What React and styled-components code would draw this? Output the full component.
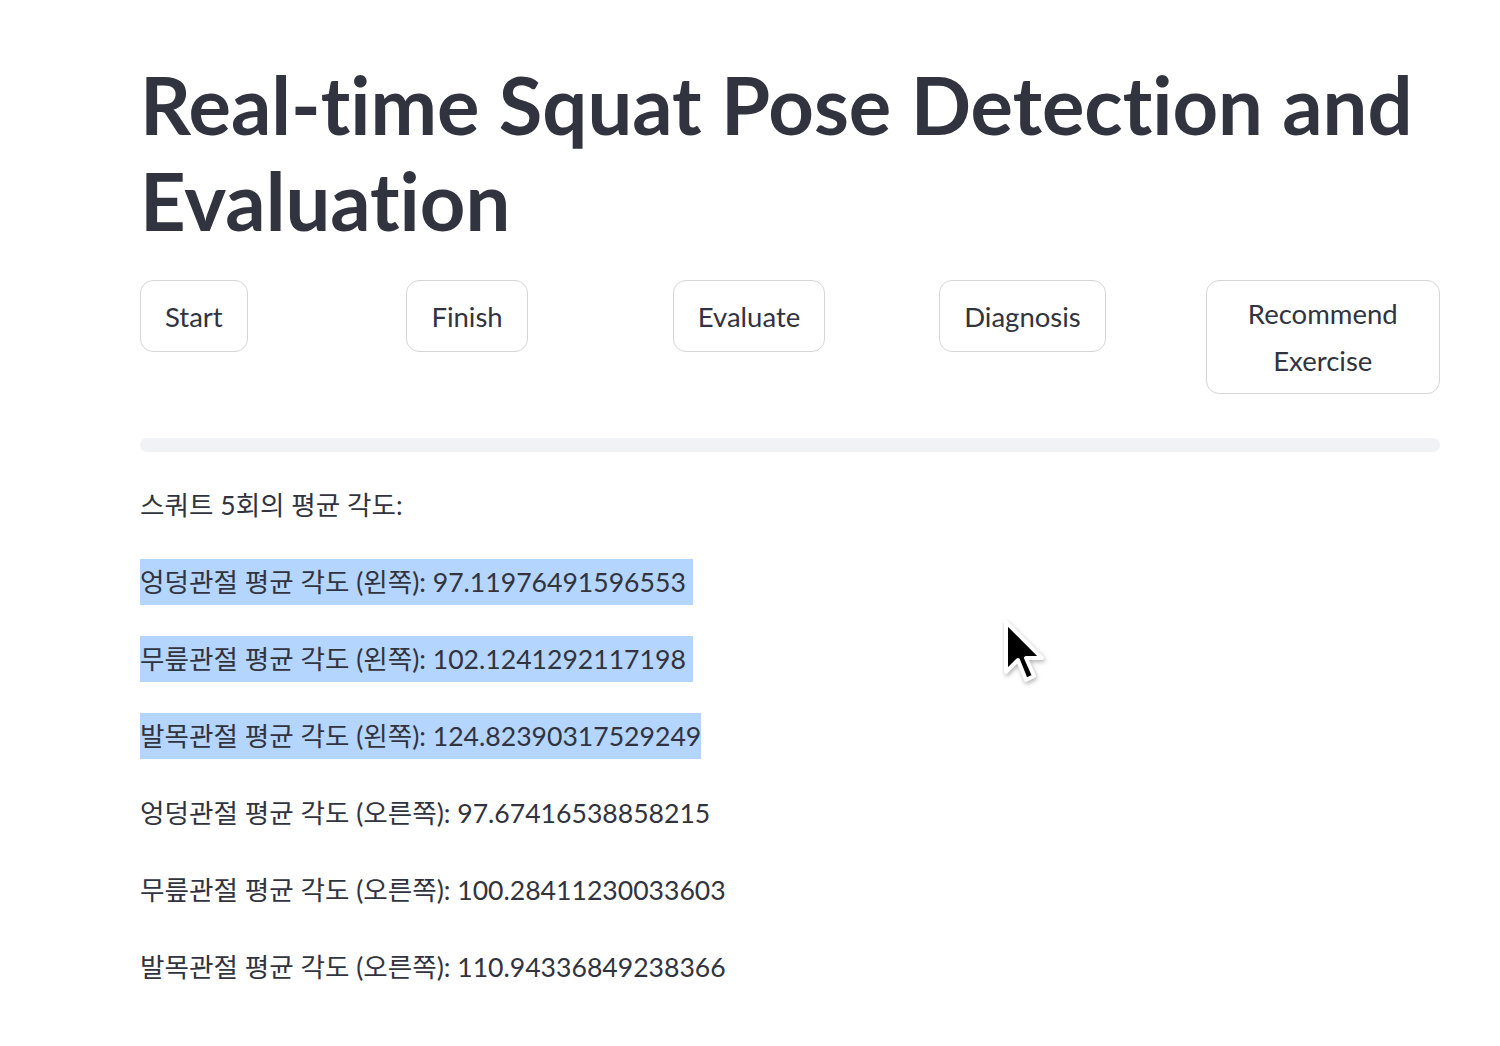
import React from "react";
import styled, { createGlobalStyle } from "styled-components";

const GlobalStyle = createGlobalStyle`
  body {
    margin: 0;
    background: #ffffff;
    font-family: "Lato", "Noto Sans CJK KR", sans-serif;
    color: #31333f;
    font-variant-ligatures: none;
  }
  button {
    font-variant-ligatures: none;
  }
`;

const Page = styled.div`
  position: relative;
  width: 1500px;
  height: 1046px;
  overflow: hidden;
`;

const Main = styled.main`
  width: 1300px;
  padding: 57px 0 0 140px;
`;

const Title = styled.h1`
  margin: 0;
  font-family: "Lato", sans-serif;
  font-weight: 700;
  font-size: 79.5px;
  line-height: 96px;
  color: #31333f;
`;

const ButtonRow = styled.div`
  display: grid;
  grid-template-columns: repeat(5, minmax(0, 1fr));
  gap: 32px;
  margin-top: 31px;
  align-items: start;
`;

const Button = styled.button`
  justify-self: start;
  max-width: 100%;
  min-height: 72px;
  padding: 9px 24px;
  background: #ffffff;
  border: 1px solid #d6d6d9;
  border-radius: 13px;
  font-family: "Lato", sans-serif;
  font-size: 27.5px;
  line-height: 47px;
  color: #31333f;
  text-align: center;
  cursor: pointer;
`;

const Progress = styled.div`
  height: 14px;
  margin-top: 44px;
  border-radius: 7px;
  background: #f0f2f6;
`;

const Results = styled.div`
  display: flex;
  flex-direction: column;
  gap: 31px;
  margin-top: 30px;
`;

const Line = styled.p`
  margin: 0;
  font-size: 26.6px;
  line-height: 46px;
  color: #31333f;
`;

const Selected = styled.span`
  display: inline-block;
  background: ${(p) => (p.$on ? "#b4d5fe" : "transparent")};
  padding-right: ${(p) => (p.$tail ? "7px" : "0")};
`;

const Cursor = styled.svg`
  position: absolute;
  left: 1002px;
  top: 620px;
  filter: drop-shadow(1px 2px 2px rgba(0, 0, 0, 0.3));
`;

const lines = [
  { text: "엉덩관절 평균 각도 (왼쪽): 97.11976491596553", on: true, tail: true },
  { text: "무릎관절 평균 각도 (왼쪽): 102.1241292117198", on: true, tail: true },
  { text: "발목관절 평균 각도 (왼쪽): 124.82390317529249", on: true },
  { text: "엉덩관절 평균 각도 (오른쪽): 97.67416538858215" },
  { text: "무릎관절 평균 각도 (오른쪽): 100.28411230033603" },
  { text: "발목관절 평균 각도 (오른쪽): 110.94336849238366" },
];

export default function App() {
  return (
    <Page>
      <GlobalStyle />
      <Main>
        <Title>Real-time Squat Pose Detection and Evaluation</Title>
        <ButtonRow>
          <Button>Start</Button>
          <Button>Finish</Button>
          <Button>Evaluate</Button>
          <Button>Diagnosis</Button>
          <Button>Recommend Exercise</Button>
        </ButtonRow>
        <Progress />
        <Results>
          <Line>스쿼트 5회의 평균 각도:</Line>
          {lines.map((l) => (
            <Line key={l.text}>
              <Selected $on={l.on} $tail={l.tail}>
                {l.text}
              </Selected>
            </Line>
          ))}
        </Results>
      </Main>
      <Cursor width="48" height="70" viewBox="0 0 24 35">
        <path
          d="M2 1 L2 26 L8 20 L12 30 L16 28 L12 19 L20 19 Z"
          fill="#000"
          stroke="#fff"
          strokeWidth="2"
          strokeLinejoin="round"
        />
      </Cursor>
    </Page>
  );
}
